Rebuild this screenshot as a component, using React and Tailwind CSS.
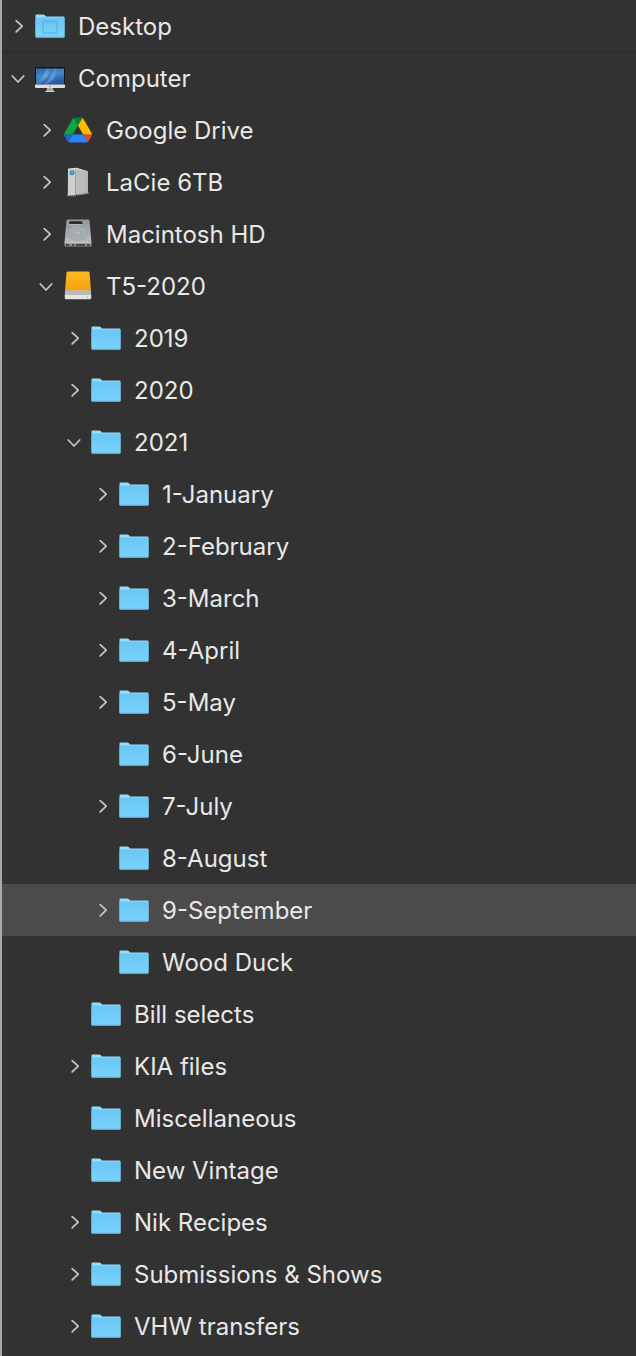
import React, { useState } from 'react';

const tree = [
  { name: 'Desktop', icon: 'desktop', expandable: true, divider: true },
  {
    name: 'Computer',
    icon: 'computer',
    expandable: true,
    children: [
      { name: 'Google Drive', icon: 'drive', expandable: true },
      { name: 'LaCie 6TB', icon: 'lacie', expandable: true },
      { name: 'Macintosh HD', icon: 'internal', expandable: true },
      {
        name: 'T5-2020',
        icon: 'external',
        expandable: true,
        children: [
          { name: '2019', expandable: true },
          { name: '2020', expandable: true },
          {
            name: '2021',
            expandable: true,
            children: [
              { name: '1-January', expandable: true },
              { name: '2-February', expandable: true },
              { name: '3-March', expandable: true },
              { name: '4-April', expandable: true },
              { name: '5-May', expandable: true },
              { name: '6-June' },
              { name: '7-July', expandable: true },
              { name: '8-August' },
              { name: '9-September', expandable: true },
              { name: 'Wood Duck' },
            ],
          },
          { name: 'Bill selects' },
          { name: 'KIA files', expandable: true },
          { name: 'Miscellaneous' },
          { name: 'New Vintage' },
          { name: 'Nik Recipes', expandable: true },
          { name: 'Submissions & Shows', expandable: true },
          { name: 'VHW transfers', expandable: true },
        ],
      },
    ],
  },
];

// One step of indentation per level
const indents = ['pl-[7px]', 'pl-[35px]', 'pl-[63px]', 'pl-[91px]'];

const FolderIcon = ({ desktop }) => (
  <svg viewBox="0 0 30 30" className="size-[30px]" aria-hidden="true">
    <defs>
      <linearGradient id="folderFront" x1="0" y1="0" x2="0" y2="1">
        <stop offset="0" stopColor="#6ac6f5" />
        <stop offset="1" stopColor="#7ad3fb" />
      </linearGradient>
    </defs>
    <path d="M0.5 4.4q0-1 1-1h7q.8 0 1.3.6l1.2 1.4h17.5q1 0 1 1V25.5q0 1-1 1h-27q-1 0-1-1z" fill="#92defe" />
    <path d="M0.5 7.2h29V25.5q0 1-1 1h-27q-1 0-1-1z" fill="url(#folderFront)" />
    <path d="M0.7 7h28.6" stroke="#62bfee" strokeWidth="0.7" />
    <path d="M1 26.2h28" stroke="#4ba9d8" strokeWidth="0.8" />
    {desktop && (
      <g fill="none" stroke="#4cacdc">
        <rect x="8" y="10" width="14" height="12" rx="0.8" strokeWidth="0.9" />
        <path d="M8.5 11.7h13" strokeWidth="0.5" />
      </g>
    )}
  </svg>
);

const ComputerIcon = () => (
  <svg viewBox="0 0 30 30" className="size-[30px]" aria-hidden="true">
    <defs>
      <linearGradient id="screen" x1="0" y1="0" x2="0.3" y2="1">
        <stop offset="0" stopColor="#2f68a8" />
        <stop offset="0.5" stopColor="#4288cc" />
        <stop offset="1" stopColor="#235aa5" />
      </linearGradient>
      <linearGradient id="glow" x1="0" y1="0" x2="1" y2="0">
        <stop offset="0" stopColor="#a5cdf0" stopOpacity="0.1" />
        <stop offset="0.6" stopColor="#a5cdf0" stopOpacity="0.4" />
        <stop offset="1" stopColor="#a5cdf0" stopOpacity="0" />
      </linearGradient>
    </defs>
    <rect x="0" y="4" width="30" height="21" rx="1" fill="#11151b" />
    <rect x="1" y="5.5" width="28" height="16" fill="url(#screen)" />
    <path d="M1 19Q9 14 12 5.5H17Q13 16 3 21.5H1z" fill="url(#glow)" />
    <path d="M8 21.5Q17 15 19 5.5H23Q21 16 12 21.5z" fill="url(#glow)" />
    <path d="M0 21.5H30V24q0 1-1 1H1q-1 0-1-1z" fill="#dcdde0" />
    <circle cx="15" cy="23.3" r="0.6" fill="#666" />
    <path d="M12 25h6l.6 3h-7.2z" fill="#a5a7aa" />
    <path d="M10.5 28h9v1h-9z" fill="#d5d6d8" />
  </svg>
);

const DriveIcon = () => (
  <svg viewBox="0 0 87.3 78" className="h-[26px] w-7" aria-hidden="true">
    <path d="m6.6 66.85 3.85 6.65c.8 1.4 1.95 2.5 3.3 3.3l13.75-23.8h-27.5c0 1.55.4 3.1 1.2 4.5z" fill="#1967d2" />
    <path d="m43.65 25-13.75-23.8c-1.35.8-2.5 1.9-3.3 3.3l-25.4 44a9.06 9.06 0 0 0-1.2 4.5h27.5z" fill="#0da546" />
    <path d="m73.55 76.8c1.35-.8 2.5-1.9 3.3-3.3l1.6-2.75 7.65-13.25c.8-1.4 1.2-2.95 1.2-4.5h-27.5l5.85 11.5z" fill="#ea4335" />
    <path d="m43.65 25 13.75-23.8c-1.35-.8-2.9-1.2-4.5-1.2h-18.5c-1.6 0-3.15.45-4.5 1.2z" fill="#0b8031" />
    <path d="m59.8 53h-32.3l-13.75 23.8c1.35.8 2.9 1.2 4.5 1.2h50.8c1.6 0 3.15-.45 4.5-1.2z" fill="#2684fc" />
    <path d="m73.4 26.5-12.7-22c-.8-1.4-1.95-2.5-3.3-3.3l-13.75 23.8 16.15 28h27.45c0-1.55-.4-3.1-1.2-4.5z" fill="#ffba00" />
  </svg>
);

const LacieIcon = () => (
  <svg viewBox="0 0 30 30" className="size-[30px]" aria-hidden="true">
    <path d="M3.5 28.5 13 29.5 27 26.5 26 25z" fill="#18191a" />
    <path d="M5 1.5h7.5V28L4.8 28.3z" fill="#cdcecf" />
    <path d="M12.5 1.5 25 4.2V25.8L12.5 28z" fill="#bbbcbe" />
    <path d="M5 1.5 13.5 .8 25 4.2 12.5 2.2z" fill="#dfe0e1" />
    <path d="M12.5 2V28" stroke="#a3a5a7" strokeWidth="0.6" />
    <path d="M23.8 4.2V26" stroke="#9fa0a2" strokeWidth="0.7" />
    <path d="M4 28.5 13 29M14 28.3 26.5 26" stroke="#d0d0d0" strokeWidth="0.7" />
    <circle cx="9" cy="5.8" r="2.5" fill="#2f8dbb" />
    <circle cx="9" cy="5.8" r="0.8" fill="#bfe2f0" />
  </svg>
);

const InternalDriveIcon = () => (
  <svg viewBox="0 0 30 30" className="size-[30px]" aria-hidden="true">
    <defs>
      <linearGradient id="drivePlate" x1="0" y1="0" x2="0" y2="1">
        <stop offset="0" stopColor="#8f979b" />
        <stop offset="1" stopColor="#b9c0c4" />
      </linearGradient>
    </defs>
    <path d="M3.5 1.5q.2-1 1.2-1h20.6q1 0 1.2 1L28.5 24H1.5z" fill="url(#drivePlate)" />
    <path d="M6.5 2.3H19l.8 2.7H6z" fill="#25292c" />
    <path d="M6 5.4h13.5" stroke="#c5cbce" strokeWidth="0.6" />
    <ellipse cx="14.5" cy="14.3" rx="9.5" ry="7.5" fill="#a5adb1" stroke="#979fa3" strokeWidth="0.5" />
    <ellipse cx="14.5" cy="14" rx="3.4" ry="2.2" fill="#b2b9bd" stroke="#8b9296" strokeWidth="0.5" />
    <path d="M17 16.5 24 21" stroke="#959ca0" strokeWidth="0.6" />
    <path d="M1.5 24h27v2.5q0 1-1 1h-25q-1 0-1-1z" fill="#8a9195" />
    <path d="M1.6 23.8h26.8" stroke="#cfd4d6" strokeWidth="0.6" />
    <path d="M3 25h3v2H3zM9 25h2v2H9zM13 25h9v2h-9zM24 25h2.5v2H24z" fill="#4f4846" />
    <g fill="#7a8185">
      <circle cx="5" cy="7" r="0.5" />
      <circle cx="25" cy="4" r="0.5" />
      <circle cx="3.8" cy="22" r="0.5" />
      <circle cx="26.2" cy="22" r="0.5" />
    </g>
  </svg>
);

const ExternalDriveIcon = () => (
  <svg viewBox="0 0 30 30" className="size-[30px]" aria-hidden="true">
    <defs>
      <linearGradient id="driveTop" x1="0" y1="0" x2="0" y2="1">
        <stop offset="0" stopColor="#fbbc22" />
        <stop offset="1" stopColor="#f5a00c" />
      </linearGradient>
    </defs>
    <path d="M3.5 1.7Q3.7.5 5 .5H25Q26.3.5 26.5 1.7L28 20H2z" fill="url(#driveTop)" />
    <path d="M2.1 19.3h25.8l.3 5.2H1.8z" fill="#b9babb" />
    <path d="M1.8 24h26.4v3q0 1.3-1.3 1.3H3.1q-1.3 0-1.3-1.3z" fill="#e4e5e6" />
    <circle cx="24.5" cy="26" r="0.6" fill="#9a9a9a" />
  </svg>
);

const icons = {
  computer: ComputerIcon,
  drive: DriveIcon,
  lacie: LacieIcon,
  internal: InternalDriveIcon,
  external: ExternalDriveIcon,
};

const ItemIcon = ({ type }) => {
  const Icon = icons[type];
  return Icon ? <Icon /> : <FolderIcon desktop={type === 'desktop'} />;
};

const Chevron = ({ open }) => (
  <svg
    viewBox="0 0 20 20"
    className="size-5"
    fill="none"
    stroke="#c4c4c4"
    strokeWidth="1.8"
    strokeLinecap="round"
    strokeLinejoin="round"
    aria-hidden="true"
  >
    <path d={open ? 'M3.3 8 9 14 14.7 8' : 'M7.2 4.6 13.2 10.2 7.2 15.8'} />
  </svg>
);

const TreeItem = ({ item, depth, selected, onSelect }) => {
  const [open, setOpen] = useState(Boolean(item.children));
  const isSelected = selected === item.name;

  return (
    <li>
      <div
        className={`flex h-[52px] items-center ${indents[depth]} ${
          isSelected ? 'bg-[#4b4b4b]' : ''
        } ${item.divider ? 'border-b border-[#292929]' : ''}`}
      >
        <div className="mr-1.5 size-5 shrink-0">
          {item.expandable && (
            <button
              type="button"
              className="block"
              aria-expanded={open}
              aria-label={`Toggle ${item.name}`}
              onClick={() => setOpen(!open)}
            >
              <Chevron open={open} />
            </button>
          )}
        </div>
        <button
          type="button"
          className="flex flex-1 items-center gap-[13px] text-left"
          onClick={() => onSelect(item.name)}
        >
          <span className="flex size-[30px] shrink-0 items-center justify-center">
            <ItemIcon type={item.icon} />
          </span>
          <span className="whitespace-nowrap pt-0.5">{item.name}</span>
        </button>
      </div>
      {open && item.children && (
        <ul>
          {item.children.map((child) => (
            <TreeItem
              key={child.name}
              item={child}
              depth={depth + 1}
              selected={selected}
              onSelect={onSelect}
            />
          ))}
        </ul>
      )}
    </li>
  );
};

const App = () => {
  const [selected, setSelected] = useState('9-September');

  return (
    <nav
      aria-label="Folders"
      className="min-h-screen border-l-2 border-[#a8aaaa] bg-[#323232] pb-1 font-['Inter',sans-serif] text-2xl text-[#e8e8e8]"
    >
      <ul>
        {tree.map((item) => (
          <TreeItem
            key={item.name}
            item={item}
            depth={0}
            selected={selected}
            onSelect={setSelected}
          />
        ))}
      </ul>
    </nav>
  );
};

export default App;
